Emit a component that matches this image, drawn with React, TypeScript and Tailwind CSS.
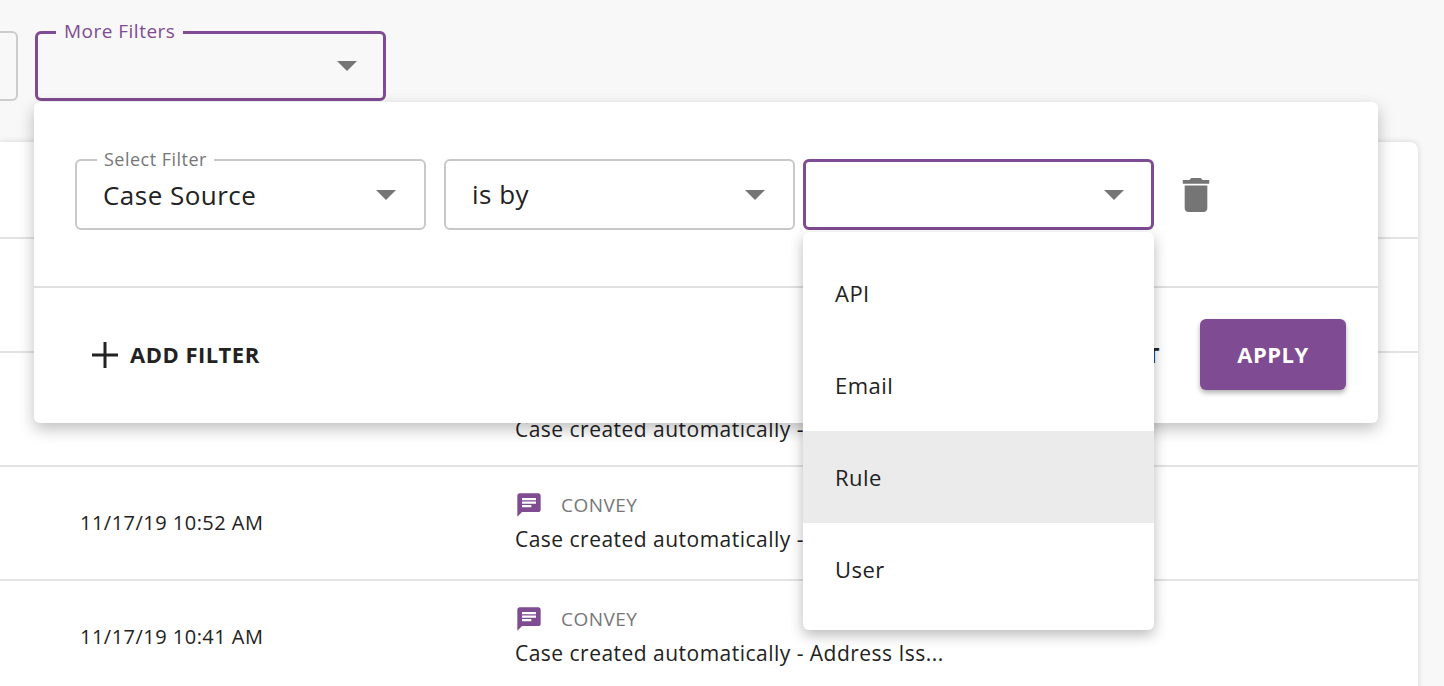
import React from "react";

const Caret = () => (
  <svg width="20" height="10" viewBox="0 0 20 10"><path d="M0 0h20L10 10z" fill="#757575" /></svg>
);

const Chat = () => (
  <svg width="28" height="28" viewBox="0 0 24 24"><path d="M20 2H4c-1.1 0-2 .9-2 2v18l4-4h14c1.1 0 2-.9 2-2V4c0-1.1-.9-2-2-2zM6 9h12v2H6V9zm8 5H6v-2h8v2zm4-6H6V6h12v2z" fill="#7f4b92" /></svg>
);

function Row({ date, text }: { date?: string; text?: string }) {
  return (
    <div className="h-[114px] border-b-2 border-[#e3e3e3] flex items-center relative">
      {date && <div className="ml-[80px] w-[435px] text-[20px] text-[#222]">{date}</div>}
      {text && (
        <div className="flex flex-col gap-[4px]">
          <div className="flex items-center gap-[18px] text-[19px] text-[#777]"><Chat />CONVEY</div>
          <div className="text-[21px] text-[#222]">{text}</div>
        </div>
      )}
    </div>
  );
}

export default function App() {
  return (
    <div className="w-[1444px] h-[686px] bg-[#f8f8f8] relative overflow-hidden tracking-[0.03em]" style={{ fontFamily: "'Open Sans', Lato, sans-serif" }}>
      <div className="flex gap-[17px] pt-[31px] h-[142px]">
        <div className="w-[18px] h-[70px] border-2 border-l-0 border-[#ccc] rounded-r-[6px]" />
        <div className="relative w-[351px] h-[70px] border-[3px] border-[#7f4b92] rounded-[6px] flex items-center justify-end pr-[26px]">
          <span className="absolute -top-[16px] left-[18px] bg-[#f8f8f8] px-[8px] text-[19px] text-[#7f4b92] leading-[26px]">More Filters</span>
          <Caret />
        </div>
      </div>
      <div className="w-[1418px] bg-white rounded-tr-[8px] shadow-[0_0_6px_rgba(0,0,0,0.15)]">
        <div className="h-[97px] border-b-2 border-[#e3e3e3]" />
        <Row />
        <div className="h-[114px] border-b-2 border-[#e3e3e3] flex items-end pb-[20px] pl-[515px] text-[21px] text-[#222]">Case created automatically - Address Iss...</div>
        <Row date="11/17/19 10:52 AM" text="Case created automatically - Address Iss..." />
        <Row date="11/17/19 10:41 AM" text="Case created automatically - Address Iss..." />
      </div>

      <div className="absolute left-[34px] top-[102px] w-[1344px] h-[321px] bg-white rounded-[6px] shadow-[0_6px_16px_rgba(0,0,0,0.25)]">
        <div className="h-[186px] border-b-2 border-[#e0e0e0] flex items-start pt-[57px] pl-[41px] gap-[18px]">
          <div className="relative w-[351px] h-[71px] border-2 border-[#c8c8c8] rounded-[6px] flex items-center justify-between pl-[26px] pr-[28px]">
            <span className="absolute -top-[13px] left-[20px] bg-white px-[7px] text-[18px] text-[#777] leading-[22px]">Select Filter</span>
            <span className="text-[26px] text-[#222] pt-[1px]">Case Source</span>
            <Caret />
          </div>
          <div className="w-[351px] h-[71px] border-2 border-[#c8c8c8] rounded-[6px] flex items-center justify-between pl-[26px] pr-[28px]">
            <span className="text-[26px] text-[#222]">is by</span>
            <Caret />
          </div>
          <div className="-ml-[10px] w-[351px] h-[71px] border-[3px] border-[#7f4b92] rounded-[6px] flex items-center justify-end pr-[27px]">
            <Caret />
          </div>
          <svg className="ml-[10px] mt-[19px]" width="28" height="34" viewBox="5 3 14 18"><path d="M6 19c0 1.1.9 2 2 2h8c1.1 0 2-.9 2-2V7H6v12zM19 4h-3.5l-1-1h-5l-1 1H5v2h14V4z" fill="#757575" /></svg>
        </div>
        <div className="flex items-center h-[133px] pl-[56px] pr-[32px]">
          <div className="flex items-center gap-[10px] text-[22px] font-bold text-[#222]">
            <svg width="30" height="30" viewBox="0 0 30 30"><path d="M15 2v26M2 15h26" stroke="#222" strokeWidth="3" /></svg>
            ADD FILTER
          </div>
          <div className="ml-auto mr-[40px] text-[22px] font-bold text-[#222]">RESET</div>
          <button className="w-[146px] h-[71px] rounded-[6px] bg-[#7f4b92] text-white text-[22px] font-bold shadow-[0_3px_5px_rgba(0,0,0,0.3)]">APPLY</button>
        </div>
      </div>

      <div className="absolute left-[803px] top-[232px] w-[351px] h-[398px] bg-white rounded-[6px] shadow-[0_5px_14px_rgba(0,0,0,0.28)] flex flex-col justify-center">
        {["API", "Email", "Rule", "User"].map((o) => (
          <div key={o} className={`h-[92px] flex items-center pl-[32px] text-[22px] text-[#222] ${o === "Rule" ? "bg-[#ebebeb]" : ""}`}>{o}</div>
        ))}
      </div>
    </div>
  );
}
